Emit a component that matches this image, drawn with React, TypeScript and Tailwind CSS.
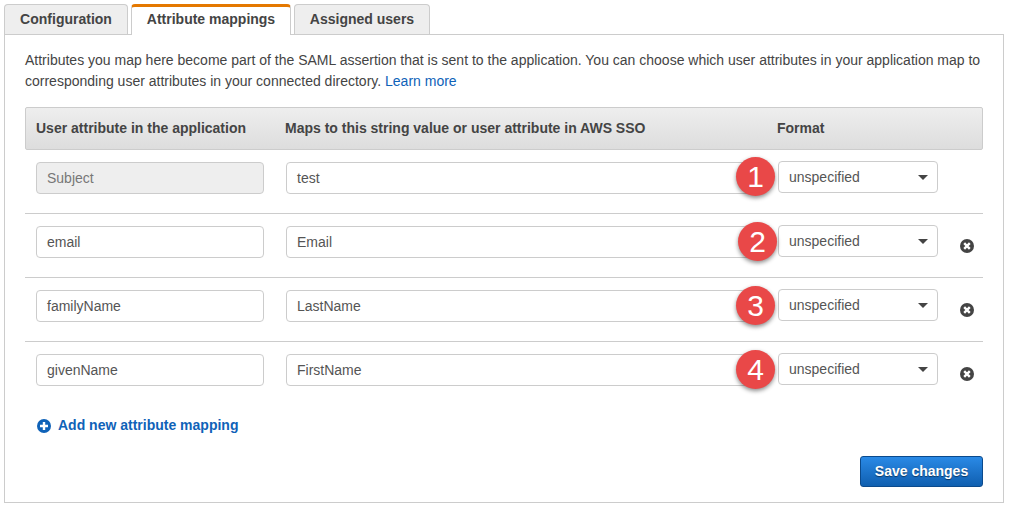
import React from 'react';

const rows = [
  { attr: 'Subject', value: 'test', locked: true, badge: 'left-[736px] top-[157px]' },
  { attr: 'email', value: 'Email', locked: false, badge: 'left-[738px] top-[222px]' },
  { attr: 'familyName', value: 'LastName', locked: false, badge: 'left-[736px] top-[286px]' },
  { attr: 'givenName', value: 'FirstName', locked: false, badge: 'left-[736px] top-[350px]' },
];

function Tab({ label, active, width }: { label: string; active?: boolean; width: string }) {
  if (active) {
    return (
      <div className={`${width} h-[31px] pb-[3px] -mb-px relative z-10 bg-white border-x border-[#ccc] border-t-[3px] border-t-[#e47800] rounded-t-[4px] flex items-center justify-center font-bold text-[#444]`}>
        {label}
      </div>
    );
  }
  return (
    <div className={`${width} h-[30px] bg-[#eee] border border-b-0 border-[#ccc] rounded-t-[4px] flex items-center justify-center font-bold text-[#444]`}>
      {label}
    </div>
  );
}

function Field({ value, locked, width }: { value: string; locked?: boolean; width: string }) {
  return (
    <div className={`${width} h-[32px] flex items-center px-[10px] border border-[#ccc] rounded-[4px] ${locked ? 'bg-[#eee] text-[#777]' : 'bg-white text-[#555]'}`}>
      {value}
    </div>
  );
}

function RemoveIcon() {
  return (
    <svg width="14" height="14" viewBox="0 0 14 14">
      <circle cx="7" cy="7" r="7" fill="#444" />
      <path d="M4.2 4.2l5.6 5.6M9.8 4.2l-5.6 5.6" stroke="#fff" strokeWidth="2.4" />
    </svg>
  );
}

function AddIcon() {
  return (
    <svg width="14" height="14" viewBox="0 0 14 14">
      <circle cx="7" cy="7" r="7" fill="#0f62b8" />
      <path d="M7 3v8M3 7h8" stroke="#fff" strokeWidth="2.4" />
    </svg>
  );
}

export default function App() {
  return (
    <div className="relative w-[1009px] h-[508px] bg-white font-['Liberation_Sans',Arial,sans-serif] text-[14px] text-[#444] overflow-hidden">
      <div className="pl-[4px] pt-[4px] flex gap-[3px]">
        <Tab label="Configuration" width="w-[124px]" />
        <Tab label="Attribute mappings" active width="w-[160px]" />
        <Tab label="Assigned users" width="w-[136px]" />
      </div>

      <div className="ml-[4px] w-[1000px] h-[469px] border border-[#ccc] px-[20px] pt-[15px]">
        <p className="leading-[21px] w-[960px]">
          Attributes you map here become part of the SAML assertion that is sent to the application. You can choose which user attributes in your application map to corresponding user attributes in your connected directory. <span className="text-[#0f62b8]">Learn more</span>
        </p>

        <div className="mt-[15px] w-[958px] h-[43px] flex items-center pl-[10px] border border-[#ccc] rounded-[2px] bg-gradient-to-b from-[#eeeeee] to-[#dddddd] font-bold">
          <div className="w-[249px]">User attribute in the application</div>
          <div className="w-[492px]">Maps to this string value or user attribute in AWS SSO</div>
          <div>Format</div>
        </div>

        <div className="w-[958px]">
          {rows.map((row, i) => (
            <div key={row.attr} className={`h-[64px] flex pl-[11px] pt-[12px] ${i < rows.length - 1 ? 'border-b border-[#ccc]' : ''}`}>
              <Field value={row.attr} locked={row.locked} width="w-[228px]" />
              <div className="w-[22px]" />
              <Field value={row.value} width="w-[464px]" />
              <div className="w-[28px]" />
              <div className="w-[160px] h-[32px] -mt-px flex items-center justify-between pl-[10px] pr-[9px] border border-[#ccc] rounded-[4px] bg-white text-[#555]">
                <span>unspecified</span>
                <span className="w-0 h-0 border-x-[5px] border-x-transparent border-t-[5px] border-t-[#444]" />
              </div>
              {!row.locked && (
                <div className="ml-[22px] mt-[13px]">
                  <RemoveIcon />
                </div>
              )}
            </div>
          ))}
        </div>

        <div className="mt-[9px] ml-[12px] flex items-center gap-[7px] font-bold text-[#0f62b8]">
          <AddIcon />
          <span>Add new attribute mapping</span>
        </div>

        <div className="mt-[20px] w-[958px] flex justify-end">
          <div className="w-[123px] h-[31px] flex items-center justify-center rounded-[3px] border border-[#0b4a8c] bg-gradient-to-b from-[#2a8ae6] to-[#0f5fb0] text-white font-bold [text-shadow:0_1px_1px_rgba(0,0,0,0.5)]">
            Save changes
          </div>
        </div>
      </div>

      {rows.map((row, i) => (
        <div key={i} className={`absolute ${row.badge} w-[39px] h-[39px] rounded-full bg-[#e94848] shadow-[0_2px_4px_rgba(0,0,0,0.45)] flex items-center justify-center text-white text-[30px] leading-none`}>
          {i + 1}
        </div>
      ))}
    </div>
  );
}
